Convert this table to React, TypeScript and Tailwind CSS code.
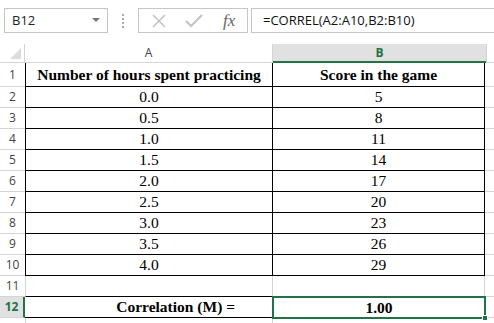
import React from 'react';

const rows = [
  { a: '0.0', b: '5' },
  { a: '0.5', b: '8' },
  { a: '1.0', b: '11' },
  { a: '1.5', b: '14' },
  { a: '2.0', b: '17' },
  { a: '2.5', b: '20' },
  { a: '3.0', b: '23' },
  { a: '3.5', b: '26' },
  { a: '4.0', b: '29' },
];

const serif = { fontFamily: '"Liberation Serif", "Times New Roman", serif' };
const ui = { fontFamily: '"Open Sans", "Noto Sans", sans-serif' };

function RowHead({ n, active }: { n: number; active?: boolean }) {
  return (
    <div
      style={ui}
      className={`w-[25px] shrink-0 flex items-center justify-center text-[12px] border-b border-[#d4d4d4] ${
        active ? 'bg-[#e1e1e1] text-[#217346] font-bold border-r-2 border-r-[#217346]' : 'bg-white text-[#444]'
      }`}
    >
      {n}
    </div>
  );
}

export default function App() {
  return (
    <div className="w-[494px] h-[323px] overflow-hidden bg-white relative">
      {/* Formula bar */}
      <div className="flex items-center h-[44px] pt-[8px] pb-[11px] pl-[4px]">
        <div className="w-[104px] h-[25px] border border-[#c6c6c6] flex items-center justify-between pl-[7px] pr-[7px]">
          <span style={ui} className="text-[13px] text-[#222]">B12</span>
          <svg width="8" height="5" viewBox="0 0 8 5">
            <path d="M0 0 L8 0 L4 4 Z" fill="#777" />
          </svg>
        </div>
        <div className="w-[30px] flex flex-col items-center gap-[2px]">
          <span className="w-[2px] h-[2px] bg-[#aaa]" />
          <span className="w-[2px] h-[2px] bg-[#aaa]" />
          <span className="w-[2px] h-[2px] bg-[#aaa]" />
          <span className="w-[2px] h-[2px] bg-[#aaa]" />
        </div>
        <div className="w-[110px] h-[25px] border border-[#c6c6c6] flex items-center pl-[12px] pr-[6px] gap-[18px]">
          <svg width="16" height="16" viewBox="0 0 16 16">
            <path d="M2 2 L14 14 M14 2 L2 14" stroke="#c4c4c4" strokeWidth="1.6" />
          </svg>
          <svg width="18" height="16" viewBox="0 0 18 16">
            <path d="M1 8 L6 13 L17 2" stroke="#c4c4c4" strokeWidth="2.2" fill="none" />
          </svg>
          <span style={serif} className="italic text-[17px] text-[#666] ml-[2px]">fx</span>
        </div>
        <div className="flex-1 h-[25px] ml-[3px] border border-[#c6c6c6] border-r-0 flex items-center pl-[11px]">
          <span style={ui} className="text-[13px] text-[#111]">=CORREL(A2:A10,B2:B10)</span>
        </div>
      </div>

      {/* Column headers */}
      <div className="flex h-[19px]">
        <div className="w-[25px] shrink-0 border-r border-b border-[#d4d4d4] relative">
          <svg className="absolute right-[3px] bottom-[3px]" width="11" height="11" viewBox="0 0 11 11">
            <path d="M11 0 L11 11 L0 11 Z" fill="#dcdcdc" />
          </svg>
        </div>
        <div style={ui} className="w-[248px] shrink-0 flex items-center justify-center text-[12px] text-[#444] border-r border-b border-[#d4d4d4]">
          A
        </div>
        <div style={ui} className="w-[213px] shrink-0 flex items-center justify-center text-[12px] font-bold text-[#217346] bg-[#e1e1e1] border-b-2 border-[#217346]">
          B
        </div>
        <div className="flex-1 border-l border-b border-[#d4d4d4]" />
      </div>

      {/* Row 1 */}
      <div className="flex h-[24px]">
        <RowHead n={1} />
        <div style={serif} className="w-[248px] shrink-0 flex items-center justify-center text-[15.5px] font-bold text-black border-l border-r border-b border-black">
          Number of hours spent practicing
        </div>
        <div style={serif} className="w-[212px] shrink-0 flex items-center justify-center text-[15.5px] font-bold text-black border-r border-b border-black">
          Score in the game
        </div>
        <div className="flex-1 border-b border-[#d4d4d4]" />
      </div>

      {rows.map((r, i) => (
        <div key={i} className="flex h-[21px]">
          <RowHead n={i + 2} />
          <div style={serif} className="w-[248px] shrink-0 flex items-center justify-center text-[15.5px] text-black border-l border-r border-b border-black">
            {r.a}
          </div>
          <div style={serif} className="w-[212px] shrink-0 flex items-center justify-center text-[15.5px] text-black border-r border-b border-black">
            {r.b}
          </div>
          <div className="flex-1 border-b border-[#d4d4d4]" />
        </div>
      ))}

      {/* Row 11 */}
      <div className="flex h-[21px]">
        <RowHead n={11} />
        <div className="w-[248px] shrink-0 border-l border-r border-[#d4d4d4] border-b border-b-black" />
        <div className="w-[212px] shrink-0 border-r border-b border-[#d4d4d4]" />
        <div className="flex-1 border-b border-[#d4d4d4]" />
      </div>

      {/* Row 12 */}
      <div className="flex h-[21px]">
        <RowHead n={12} active />
        <div style={serif} className="w-[247px] shrink-0 flex items-center justify-end pr-[37px] text-[15.5px] font-bold text-black border-b border-black">
          Correlation (M) =
        </div>
        <div style={serif} className="w-[214px] -mt-px h-[23px] shrink-0 flex items-center justify-center text-[15.5px] font-bold text-black border-2 border-[#217346] relative">
          1.00
          <span className="absolute -right-[4px] -bottom-[4px] w-[6px] h-[6px] bg-[#217346] border border-white" />
        </div>
        <div className="flex-1 border-b border-[#d4d4d4]" />
      </div>

      {/* Row 13 partial */}
      <div className="flex h-[21px]">
        <div className="w-[25px] shrink-0" />
        <div className="w-[248px] shrink-0 border-l border-r border-[#d4d4d4]" />
      </div>
    </div>
  );
}
